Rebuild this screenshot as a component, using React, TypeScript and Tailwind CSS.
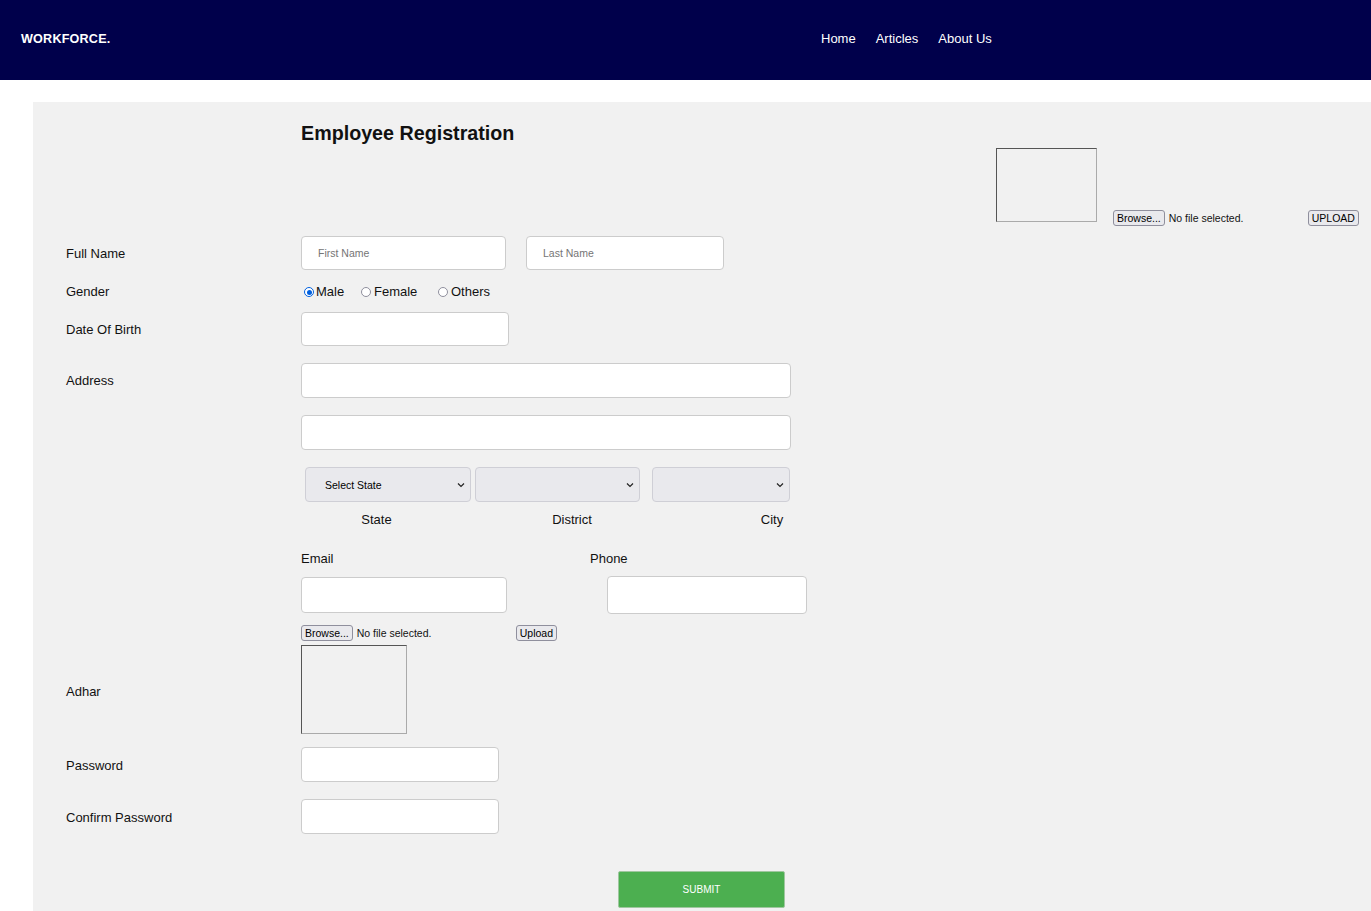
import React from "react";

const inputCls =
  "block bg-white border border-[#cccccc] rounded-[4px] outline-none text-[10.5px] text-[#333]";

const labelCls = "w-[268px] pl-[33px] pt-[2px]";

function FileBtn({ label }: { label: string }) {
  return (
    <span className="inline-flex items-center h-[16px] px-[3px] border border-[#8f8f9d] rounded-[3px] bg-[#e9e9ed] text-[10.5px] leading-none text-black">
      {label}
    </span>
  );
}

function Radio({ checked }: { checked?: boolean }) {
  return checked ? (
    <span className="inline-block w-[10px] h-[10px] rounded-full border border-[#0060df] bg-white relative">
      <span className="absolute inset-[1.5px] rounded-full bg-[#0060df]" />
    </span>
  ) : (
    <span className="inline-block w-[10px] h-[10px] rounded-full border border-[#8f8f9d] bg-white" />
  );
}

function Select({ w, text }: { w: string; text?: string }) {
  return (
    <div
      className={`${w} h-[35px] bg-[#e9e9ed] border border-[#cfcfd6] rounded-[4px] flex items-center justify-between pl-[19px] pr-[5px] text-[10.5px] text-black`}
    >
      <span>{text ?? ""}</span>
      <svg width="8" height="6" viewBox="0 0 8 6">
        <path d="M1 1.5 L4 4.5 L7 1.5" stroke="#222" strokeWidth="1.2" fill="none" />
      </svg>
    </div>
  );
}

export default function App() {
  return (
    <div
      className="w-[1371px] h-[911px] overflow-hidden bg-white text-black"
      style={{ fontFamily: '"Liberation Sans", Arial, sans-serif' }}
    >
      <header className="h-[80px] bg-[#00004b] flex items-center">
        <div className="pl-[21px] text-white font-bold text-[12.6px] leading-[18px] tracking-[0.2px] w-[800px] -mt-[3px]">
          WORKFORCE.
        </div>
        <nav className="flex gap-[20px] text-white text-[13px] leading-[18px] pl-[21px] -mt-[3px]">
          <span>Home</span>
          <span>Articles</span>
          <span>About Us</span>
        </nav>
      </header>

      <main className="mt-[22px] ml-[33px] bg-[#f1f1f1] h-[820px] text-[13px] leading-[20px] text-[#111]">
        {/* title + photo */}
        <div className="flex h-[134px]">
          <div className="w-[268px]" />
          <div className="w-[695px] pt-[19px]">
            <h1 className="font-bold text-[19.7px] leading-[24px]">Employee Registration</h1>
          </div>
          <div className="flex items-end pb-[14px]">
            <div className="w-[101px] h-[74px] border border-[#555] border-r-[#aaa] border-b-[#aaa]" />
            <div className="ml-[16px] flex items-center mb-[-6px]">
              <FileBtn label="Browse..." />
              <span className="ml-[4px] text-[10.5px] w-[139px]">No file selected.</span>
              <FileBtn label="UPLOAD" />
            </div>
          </div>
        </div>

        {/* full name */}
        <div className="flex items-center h-[34px]">
          <div className={labelCls}>Full Name</div>
          <input className={`${inputCls} w-[205px] h-[34px] px-[16px] placeholder:text-[#757575]`} placeholder="First Name" />
          <input className={`${inputCls} ml-[20px] w-[198px] h-[34px] px-[16px] placeholder:text-[#757575]`} placeholder="Last Name" />
        </div>

        {/* gender */}
        <div className="flex items-center h-[42px]">
          <div className={labelCls}>Gender</div>
          <div className="flex items-center pl-[3px] pt-[2px]">
            <Radio checked />
            <span className="ml-[2px] w-[45px]">Male</span>
            <Radio />
            <span className="ml-[3px] w-[64px]">Female</span>
            <Radio />
            <span className="ml-[3px]">Others</span>
          </div>
        </div>

        {/* dob */}
        <div className="flex items-center h-[34px]">
          <div className={labelCls}>Date Of Birth</div>
          <input className={`${inputCls} w-[208px] h-[34px]`} />
        </div>

        {/* address */}
        <div className="flex mt-[17px]">
          <div className="w-[268px] pl-[33px] pt-[8px]">Address</div>
          <div className="flex flex-col">
            <input className={`${inputCls} w-[490px] h-[35px]`} />
            <input className={`${inputCls} w-[490px] h-[35px] mt-[17px]`} />
            <div className="flex mt-[17px] pl-[4px]">
              <Select w="w-[166px]" text="Select State" />
              <div className="ml-[4px]"><Select w="w-[165px]" /></div>
              <div className="ml-[12px]"><Select w="w-[138px]" /></div>
            </div>
            <div className="flex mt-[8px] pl-[4px]">
              <div className="w-[143px] text-center">State</div>
              <div className="w-[248px] text-center">District</div>
              <div className="w-[152px] text-center">City</div>
            </div>
          </div>
        </div>

        {/* email / phone */}
        <div className="flex mt-[18px]">
          <div className="w-[268px]" />
          <div className="flex flex-col">
            <div className="flex pt-[1px]">
              <div className="w-[289px]">Email</div>
              <div>Phone</div>
            </div>
            <div className="flex items-center mt-[7px]">
              <input className={`${inputCls} w-[206px] h-[36px]`} />
              <input className={`${inputCls} ml-[100px] w-[200px] h-[38px]`} />
            </div>
            <div className="flex items-center mt-[11px] h-[16px]">
              <FileBtn label="Browse..." />
              <span className="ml-[4px] text-[10.5px] leading-[16px] w-[159px]">No file selected.</span>
              <FileBtn label="Upload" />
            </div>
          </div>
        </div>

        {/* adhar */}
        <div className="flex items-center mt-[4px]">
          <div className="w-[268px] pl-[33px] pt-[5px]">Adhar</div>
          <div className="w-[106px] h-[89px] border border-[#555] border-r-[#aaa] border-b-[#aaa]" />
        </div>

        {/* password */}
        <div className="flex items-center mt-[13px]">
          <div className={labelCls}>Password</div>
          <input type="password" className={`${inputCls} w-[198px] h-[35px]`} />
        </div>
        <div className="flex items-center mt-[17px]">
          <div className={labelCls}>Confirm Password</div>
          <input type="password" className={`${inputCls} w-[198px] h-[35px]`} />
        </div>

        <div className="flex mt-[37px] pl-[585px]">
          <button className="w-[167px] h-[37px] bg-[#4caf50] border border-[#9fc79f] rounded-[2px] text-white text-[10px]">
            SUBMIT
          </button>
        </div>
      </main>
    </div>
  );
}
